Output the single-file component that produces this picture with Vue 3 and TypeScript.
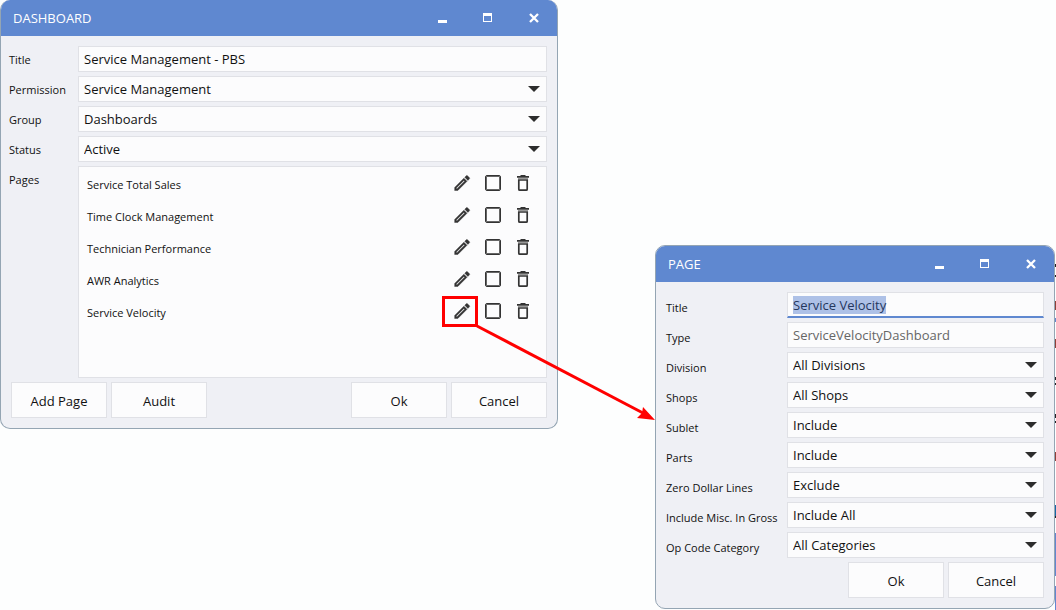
<script setup lang="ts">
import { onMounted, ref } from 'vue'

interface SelectField {
  id: string
  label: string
  value: string
}

const dashboardTitle = ref('Service Management - PBS')
const dashboardFields = ref<SelectField[]>([
  { id: 'dash-permission', label: 'Permission', value: 'Service Management' },
  { id: 'dash-group', label: 'Group', value: 'Dashboards' },
  { id: 'dash-status', label: 'Status', value: 'Active' },
])

const pages = [
  'Service Total Sales',
  'Time Clock Management',
  'Technician Performance',
  'AWR Analytics',
  'Service Velocity',
]

const pageTitle = ref('Service Velocity')
const pageType = ref('ServiceVelocityDashboard')
const pageFields = ref<SelectField[]>([
  { id: 'page-division', label: 'Division', value: 'All Divisions' },
  { id: 'page-shops', label: 'Shops', value: 'All Shops' },
  { id: 'page-sublet', label: 'Sublet', value: 'Include' },
  { id: 'page-parts', label: 'Parts', value: 'Include' },
  { id: 'page-zero', label: 'Zero Dollar Lines', value: 'Exclude' },
  { id: 'page-misc', label: 'Include Misc. In Gross', value: 'Include All' },
  { id: 'page-opcode', label: 'Op Code Category', value: 'All Categories' },
])

const titleInput = ref<HTMLInputElement | null>(null)

onMounted(() => {
  titleInput.value?.focus()
  titleInput.value?.select()
})
</script>

<template>
  <main class="canvas">
    <section class="dialog dialog-dashboard" aria-labelledby="dash-heading">
      <header class="titlebar">
        <h1 id="dash-heading">DASHBOARD</h1>
        <div class="window-controls">
          <button type="button" aria-label="Minimize">
            <svg width="12" height="12" viewBox="0 0 12 12"><path d="M2 8h9v3H2z" fill="#fff" /></svg>
          </button>
          <button type="button" aria-label="Maximize">
            <svg width="12" height="12" viewBox="0 0 12 12"><path d="M1 1h9v9H1zM2 4v5h7V4z" fill="#fff" fill-rule="evenodd" /></svg>
          </button>
          <button type="button" aria-label="Close">
            <svg width="12" height="12" viewBox="0 0 12 12"><path d="M2 2l8 8M10 2l-8 8" stroke="#fff" stroke-width="2.3" /></svg>
          </button>
        </div>
      </header>
      <form class="body" @submit.prevent>
        <div class="row">
          <label for="dash-title">Title</label>
          <input id="dash-title" v-model="dashboardTitle" class="field" type="text" />
        </div>
        <div v-for="f in dashboardFields" :key="f.id" class="row">
          <label :for="f.id">{{ f.label }}</label>
          <div class="select-wrap">
            <select :id="f.id" v-model="f.value" class="field">
              <option>{{ f.value }}</option>
            </select>
            <svg class="caret" width="12" height="6" viewBox="0 0 12 6"><path d="M0 0h12L6 6z" fill="#2d2d2d" /></svg>
          </div>
        </div>
        <div class="row row-pages">
          <span id="pages-label" class="label">Pages</span>
          <ul class="pages" aria-labelledby="pages-label">
            <li v-for="(name, i) in pages" :key="name">
              <span class="page-name">{{ name }}</span>
              <button type="button" class="icon-button" :class="{ marked: i === pages.length - 1 }" :aria-label="`Edit ${name}`">
                <svg width="20" height="20" viewBox="1 0 24 24"><path d="M14.06 9.02l.92.92L5.92 19H5v-.92l9.06-9.06M17.66 3c-.25 0-.51.1-.7.29l-1.83 1.83 3.75 3.75 1.83-1.83c.39-.39.39-1.02 0-1.41l-2.34-2.34c-.2-.2-.45-.29-.71-.29zm-3.6 3.19L3 17.25V21h3.75L17.81 9.94l-3.75-3.75z" fill="#333" stroke="#333" stroke-width=".5" /></svg>
              </button>
              <input type="checkbox" class="tick" :aria-label="`Select ${name}`" />
              <button type="button" class="icon-button" :aria-label="`Delete ${name}`">
                <svg width="20" height="20" viewBox="0 0 20 20"><path d="M4 3.9h12M7.5 2.8h5" stroke="#333" stroke-width="1.6" /><path d="M5.8 7v9.2q0 1 1 1h6.4q1 0 1-1V7z" fill="none" stroke="#333" stroke-width="1.7" /><path d="M5 5.5h10" stroke="#999" stroke-width="1" /></svg>
              </button>
            </li>
          </ul>
        </div>
        <footer class="actions">
          <button type="button" class="btn">Add Page</button>
          <button type="button" class="btn">Audit</button>
          <button type="submit" class="btn push">Ok</button>
          <button type="button" class="btn">Cancel</button>
        </footer>
      </form>
    </section>

    <section class="dialog dialog-page" aria-labelledby="page-heading">
      <header class="titlebar">
        <h1 id="page-heading">PAGE</h1>
        <div class="window-controls">
          <button type="button" aria-label="Minimize">
            <svg width="12" height="12" viewBox="0 0 12 12"><path d="M2 8h9v3H2z" fill="#fff" /></svg>
          </button>
          <button type="button" aria-label="Maximize">
            <svg width="12" height="12" viewBox="0 0 12 12"><path d="M1 1h9v9H1zM2 4v5h7V4z" fill="#fff" fill-rule="evenodd" /></svg>
          </button>
          <button type="button" aria-label="Close">
            <svg width="12" height="12" viewBox="0 0 12 12"><path d="M2 2l8 8M10 2l-8 8" stroke="#fff" stroke-width="2.3" /></svg>
          </button>
        </div>
      </header>
      <form class="body" @submit.prevent>
        <div class="row">
          <label for="page-title">Title</label>
          <input id="page-title" ref="titleInput" v-model="pageTitle" class="field active" type="text" />
        </div>
        <div class="row">
          <label for="page-type">Type</label>
          <input id="page-type" v-model="pageType" class="field muted" type="text" readonly />
        </div>
        <div v-for="f in pageFields" :key="f.id" class="row">
          <label :for="f.id">{{ f.label }}</label>
          <div class="select-wrap">
            <select :id="f.id" v-model="f.value" class="field">
              <option>{{ f.value }}</option>
            </select>
            <svg class="caret" width="12" height="6" viewBox="0 0 12 6"><path d="M0 0h12L6 6z" fill="#2d2d2d" /></svg>
          </div>
        </div>
        <footer class="actions">
          <button type="submit" class="btn push">Ok</button>
          <button type="button" class="btn">Cancel</button>
        </footer>
      </form>
    </section>

    <svg class="callout" width="182" height="102" viewBox="0 0 182 102" aria-hidden="true">
      <path d="M3 2L169 89" stroke="#f00" stroke-width="3" />
      <path d="M181 96l-18-2 5-5 1-6z" fill="#f00" />
    </svg>

    <!-- sliver of the window behind the dialogs -->
    <svg class="behind" width="1" height="610" viewBox="0 0 1 610" aria-hidden="true">
      <path d="M0 264h1v3H0zM0 275h1v2H0zM0 377h1v3H0zM0 383h1v2H0zM0 414h1v4H0zM0 421h1v2H0zM0 516h1v2H0z" fill="#222" />
      <path d="M0 301h1v9H0zM0 339h1v9H0zM0 452h1v9H0z" fill="#8f4038" />
      <path d="M0 318h1v4H0zM0 533h1v43H0zM0 586h1v24H0z" fill="#6286cf" />
      <path d="M0 505h1v11H0z" fill="#1768a5" />
    </svg>
  </main>
</template>

<style>
body {
  background: #fdfefe;
}
</style>

<style scoped>
.canvas {
  position: relative;
  display: grid;
  grid-template-columns: 558fr 400fr;
  column-gap: 97px;
  align-items: start;
  padding: 0 1px 1px 0;
  overflow: hidden;
  font-family: "Segoe UI", "Open Sans", "Noto Sans", sans-serif;
  font-size: 13px;
  color: #111;
}

.canvas * {
  box-sizing: border-box;
}

.dialog {
  border: 1px solid #94a5b3;
  border-radius: 10px;
  background: #eff0f5;
  overflow: hidden;
}

.dialog-dashboard {
  border-top: 0;
}

.dialog-page {
  margin-top: 245px;
}

.titlebar {
  display: flex;
  align-items: center;
  justify-content: space-between;
  height: 36px;
  padding: 0 17px 0 12px;
  background: #5f88d0;
}

.titlebar h1 {
  margin: 0;
  font-size: 13px;
  line-height: 18px;
  font-weight: 400;
  color: #fff;
}

.window-controls {
  display: flex;
  gap: 34px;
}

.window-controls button,
.icon-button {
  position: relative;
  display: flex;
  padding: 0;
  border: 0;
  background: none;
}

.body {
  display: flex;
  flex-direction: column;
  gap: 4px;
  padding: 10px;
}

.row {
  display: grid;
  grid-template-columns: 67px 1fr;
  align-items: center;
}

.dialog-page .row {
  grid-template-columns: 121px 1fr;
}

.row label,
.label {
  margin-left: -2px;
  padding-top: 2px;
  font-size: 11px;
  line-height: 18px;
  white-space: nowrap;
}

.dialog-page .row label {
  margin-left: 0;
  padding-top: 6px;
}

.field {
  width: 100%;
  height: 26px;
  margin: 0;
  padding: 0 5px;
  border: 1px solid #e0e1e6;
  border-radius: 0;
  outline: 0;
  background: #fcfcfd;
  color: #111;
  font: inherit;
  appearance: none;
}

.active {
  border-bottom: 2px solid #5f88d0;
  caret-color: transparent;
}

.active::selection {
  background: #aec1e7;
  color: #25375e;
}

.muted {
  color: #666;
}

.select-wrap {
  position: relative;
  display: flex;
}

.caret {
  position: absolute;
  top: 10px;
  right: 7px;
  pointer-events: none;
}

.row-pages {
  align-items: start;
}

.label {
  padding-top: 5px;
}

.pages {
  min-height: 212px;
  margin: 0;
  padding: 0 13px 0 8px;
  border: 1px solid #e0e1e6;
  background: #fcfcfd;
  list-style: none;
}

.pages li {
  display: flex;
  align-items: center;
  gap: 12px;
  height: 32px;
  font-size: 11px;
}

.page-name {
  flex: 1;
  padding-top: 2px;
}

.marked::after {
  content: "";
  position: absolute;
  inset: -5px -5px -6px -11px;
  border: 3px solid #f00;
}

.tick {
  width: 16px;
  height: 16px;
  margin: 0;
  border: 1px solid #333;
  border-radius: 2px;
  box-shadow: inset 0 0 0 1px #666;
  appearance: none;
}

.actions {
  display: flex;
  gap: 4px;
}

.btn {
  width: 96px;
  height: 36px;
  padding: 2px 0 0;
  border: 1px solid #e0e1e6;
  background: #fcfcfd;
  color: #111;
  font: inherit;
}

.push {
  margin-left: auto;
}

.callout {
  position: absolute;
  top: 324px;
  left: 474px;
  pointer-events: none;
}

.behind {
  position: absolute;
  top: 0;
  right: 0;
}
</style>
